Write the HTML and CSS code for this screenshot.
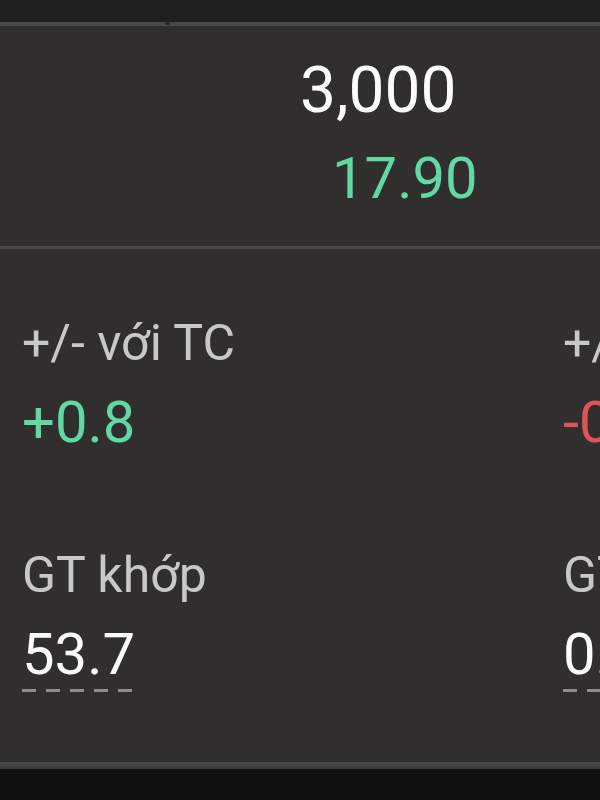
FILE: index.html
```html
<!DOCTYPE html>
<html lang="vi">
<head>
<meta charset="utf-8">
<title>Quote</title>
<link rel="stylesheet" href="styles.css">
</head>
<body>
<div class="screen">
  <div class="topbar"></div>
  <div class="rule rule-top"><span class="notch"></span></div>
  <section class="quote">
    <div class="qty">3,000</div>
    <div class="price up">17.90</div>
  </section>
  <div class="rule rule-mid"></div>
  <section class="stats">
    <div class="cell">
      <div class="label">+/- với TC</div>
      <div class="value up">+0.8</div>
    </div>
    <div class="cell">
      <div class="label">+/- với TT</div>
      <div class="value down">-0.2</div>
    </div>
    <div class="cell">
      <div class="label">GT khớp</div>
      <div class="value">53.7</div>
      <div class="dashes"></div>
    </div>
    <div class="cell">
      <div class="label">GT đặt</div>
      <div class="value">0.0</div>
      <div class="dashes"></div>
    </div>
  </section>
  <div class="rule rule-bottom"></div>
  <div class="footer"></div>
</div>
</body>
</html>
```

FILE: styles.css
```css
* { box-sizing: border-box; }

html, body {
  margin: 0;
  padding: 0;
  background: #111111;
}

body {
  font-family: Roboto, "Noto Sans", "Liberation Sans", sans-serif;
  width: 600px;
  height: 800px;
  overflow: hidden;
}

.screen {
  display: flex;
  flex-direction: column;
  width: 600px;
  height: 800px;
  overflow: hidden;
}

.topbar {
  height: 22px;
  background: #1f1f1f;
  flex: none;
}

.rule {
  flex: none;
  background: #494948;
}

.rule-top {
  height: 4px;
  position: relative;
}

.notch {
  position: absolute;
  left: 165px;
  top: -1px;
  width: 5px;
  height: 4px;
  background: #2a2a2a;
  border-radius: 0 0 2px 2px;
}

.rule-mid {
  height: 3px;
}

.rule-bottom {
  height: 7px;
  background: linear-gradient(#4a4a49, #3a3a39);
}

.quote {
  flex: none;
  height: 220px;
  background: #302f2d;
  padding-top: 33px;
  color: #ffffff;
}

.qty {
  font-size: 64px;
  line-height: 64px;
  padding-left: 300px;
  color: #fbfbfb;
}

.price {
  font-size: 58px;
  line-height: 58px;
  margin-top: 26px;
  padding-left: 332px;
}

.up { color: #62d8a2; }
.down { color: #e0535b; }

.stats {
  flex: none;
  height: 513px;
  background: #302f2d;
  padding: 64px 0 0 22px;
  display: grid;
  grid-template-columns: 541px 541px;
  row-gap: 90px;
  align-content: start;
  overflow: hidden;
}

.cell {
  display: flex;
  flex-direction: column;
  align-items: flex-start;
  white-space: nowrap;
}

.label {
  font-size: 50px;
  line-height: 60px;
  color: #c8c8c8;
}

.value {
  font-size: 58px;
  line-height: 66px;
  margin-top: 16px;
  color: #fbfbfb;
}

.value.up { color: #62d8a2; }
.value.down { color: #e0535b; }

.dashes {
  width: 114px;
  height: 3px;
  margin-top: 2px;
  background: repeating-linear-gradient(90deg, #8e8e8e 0 14px, transparent 14px 24px);
}

.footer {
  flex: 1;
  background: #111111;
}
```
